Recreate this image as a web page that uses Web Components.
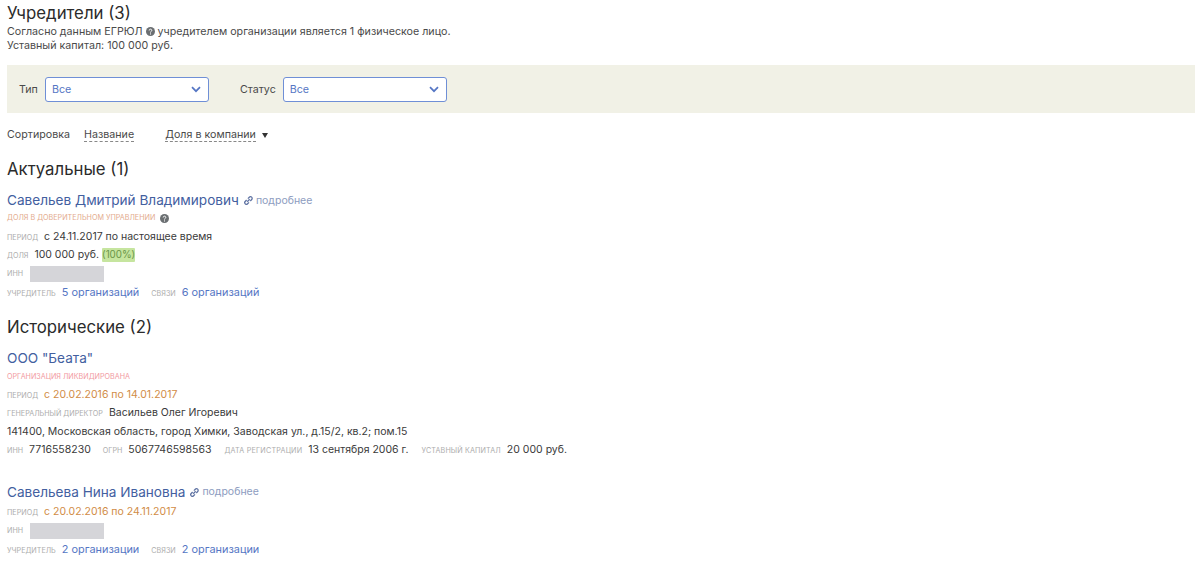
<!DOCTYPE html>
<html lang="ru">
<head>
<meta charset="utf-8">
<title>Учредители</title>
<style>
  html, body { margin: 0; background: #fff; }
  body { font-family: Inter, "Noto Sans", sans-serif; color: #333; overflow: hidden; }
  founders-page { height: 565px; }
</style>
</head>
<body>
<founders-page>
  <h-title slot="head" style="--top:2px;--h:23px">Учредители (3)</h-title>
  <div slot="head" class="intro">Согласно данным ЕГРЮЛ <q-mark></q-mark> учредителем организации является 1 физическое лицо.</div>
  <div slot="head" class="intro">Уставный капитал: 100 000 руб.</div>

  <filter-bar>
    <pick-select label="Тип" value="Все"></pick-select>
    <pick-select label="Статус" value="Все"></pick-select>
  </filter-bar>

  <sort-bar></sort-bar>

  <h-title style="--top:15px;--h:24px">Актуальные (1)</h-title>
  <person-card name="Савельев Дмитрий Владимирович" more>
    <info-row tight><small-label color="#e3ab8e">доля в доверительном управлении</small-label><q-mark style="margin-left:5px"></q-mark></info-row>
    <info-row><small-label>период</small-label><span>с 24.11.2017 по настоящее время</span></info-row>
    <info-row><small-label>доля</small-label><span>100 000 руб.</span><span class="pct">(100%)</span></info-row>
    <info-row><small-label>инн</small-label><blur-box></blur-box></info-row>
    <info-row><small-label>учредитель</small-label><a-link>5 организаций</a-link><small-label class="next">связи</small-label><a-link>6 организаций</a-link></info-row>
  </person-card>

  <h-title style="--top:13px;--h:24px">Исторические (2)</h-title>
  <person-card name="ООО &quot;Беата&quot;">
    <info-row tight style="padding-top:2px;box-sizing:border-box"><small-label color="#f29aa2">организация ликвидирована</small-label></info-row>
    <info-row><small-label>период</small-label><span class="old">с 20.02.2016 по 14.01.2017</span></info-row>
    <info-row><small-label>генеральный директор</small-label><span>Васильев Олег Игоревич</span></info-row>
    <info-row><span>141400, Московская область, город Химки, Заводская ул., д.15/2, кв.2; пом.15</span></info-row>
    <info-row><small-label>инн</small-label><span>7716558230</span><small-label class="next">огрн</small-label><span>5067746598563</span><small-label class="next far" style="letter-spacing:.2px">дата регистрации</small-label><span>13 сентября 2006 г.</span><small-label class="next far" style="letter-spacing:.13px">уставный капитал</small-label><span>20 000 руб.</span></info-row>
  </person-card>

  <person-card name="Савельева Нина Ивановна" more style="--gap:21px;--head:22px">
    <info-row><small-label>период</small-label><span class="old">с 20.02.2016 по 24.11.2017</span></info-row>
    <info-row><small-label>инн</small-label><blur-box></blur-box></info-row>
    <info-row><small-label>учредитель</small-label><a-link>2 организации</a-link><small-label class="next">связи</small-label><a-link>2 организации</a-link></info-row>
  </person-card>
</founders-page>

<script>
// each element keeps its own little template, set in the class
const define = (name, css, html, proto = {}) => {
  customElements.define(name, class extends HTMLElement {
    constructor() {
      super();
      const root = this.attachShadow({ mode: "open" });
      root.innerHTML = `<style>${css}</style>${typeof html === "function" ? html(this) : html}`;
    }
    connectedCallback() {
      if (proto.render) {
        proto.render(this);
      }
    }
  });
};

define("founders-page", `
  :host { display: block; padding: 0 5px 0 7px; box-sizing: border-box; }
  ::slotted(.intro) { font-size: 10.7px; line-height: 14px; color: #4a4a4a; }
`, `<slot name="head"></slot><slot></slot>`);

define("h-title", `
  :host {
    display: block;
    margin-top: var(--top, 0);
    font-size: 16.8px;
    line-height: var(--h, 24px);
    color: #2b2b2b;
  }
`, `<slot></slot>`);

define("q-mark", `
  :host { display: inline-block; vertical-align: -1px; width: 9px; height: 9px; }
  svg { display: block; }
`, `<svg width="9" height="9" viewBox="0 0 9 9"><circle cx="4.5" cy="4.5" r="4.5" fill="#6b6f72"/><path d="M3.2 3.5a1.3 1.3 0 1 1 1.9 1.1c-.4.2-.6.4-.6.9" fill="none" stroke="#fff" stroke-width=".9"/><circle cx="4.5" cy="6.9" r=".55" fill="#fff"/></svg>`);

define("filter-bar", `
  :host {
    display: flex;
    align-items: center;
    gap: 31px;
    height: 48px;
    margin-top: 12px;
    padding-left: 12px;
    background: #f1f1e6;
  }
`, `<slot></slot>`);

define("pick-select", `
  :host { display: flex; align-items: center; gap: 7px; font-size: 10.7px; color: #4a4a4a; }
  .box {
    display: flex;
    align-items: center;
    justify-content: space-between;
    box-sizing: border-box;
    width: 164px;
    height: 25px;
    padding: 0 7px 0 6px;
    background: #fff;
    border: 1px solid #6f8fd6;
    border-radius: 3px;
    color: #5576c4;
  }
  svg { display: block; }
`, (el) => `<span>${el.getAttribute("label")}</span>
  <div class="box"><span>${el.getAttribute("value")}</span>
  <svg width="10" height="7" viewBox="0 0 10 7"><path d="M1 1.2 5 5.2 9 1.2" fill="none" stroke="#5576c4" stroke-width="1.7"/></svg></div>`);

define("sort-bar", `
  :host {
    display: flex;
    align-items: center;
    height: 14px;
    margin-top: 14px;
    padding-top: 1px;
    font-size: 10.7px;
    line-height: 14px;
    color: #4a4a4a;
  }
  .opt { border-bottom: 1px dashed #888; line-height: 12px; }
  .first { margin-left: 14px; }
  .second { margin-left: 31px; }
  .arrow { margin-left: 6px; font-size: 0; width: 0; height: 0; border: 3.5px solid transparent; border-top: 5px solid #333; border-bottom: 0; }
`, `<span>Сортировка</span><span class="opt first">Название</span><span class="opt second">Доля в компании</span><span class="arrow"></span>`);

define("person-card", `
  :host { display: block; margin-top: var(--gap, 11px); }
  .head { display: flex; align-items: baseline; height: var(--head, 17px); line-height: var(--head, 17px); }
  .name { font-size: 13.6px; color: #43609f; }
  .more { display: inline-flex; align-items: center; gap: 3px; margin-left: 5px; font-size: 10.5px; color: #8d9cc0; }
  svg { display: block; }
`, (el) => `<div class="head"><span class="name">${el.getAttribute("name")}</span>
  ${el.hasAttribute("more") ? `<span class="more"><svg width="9" height="9" viewBox="0 0 9 9" fill="none" stroke="#5f73a3" stroke-width="1.3"><path d="M3.9 2.6 5.3 1.2a1.5 1.5 0 0 1 2.4 2.3L6.3 5"/><path d="M5 6.4 3.6 7.8A1.5 1.5 0 0 1 1.2 5.5L2.6 4"/><path d="M3.2 5.8 5.7 3.3"/></svg>подробнее</span>` : ""}</div><slot></slot>`);

define("info-row", `
  :host {
    display: flex;
    align-items: baseline;
    gap: 6px;
    height: 18.6px;
    line-height: 18.6px;
    font-size: 10.5px;
    color: #3a3a3a;
  }
  :host([tight]) { gap: 0; align-items: center; }
  ::slotted(.next) { margin-left: 6px; }
  ::slotted(.far) { margin-left: 7px; }
  ::slotted(.old) { color: #d18c46; }
  ::slotted(.pct) { background: #c6e59f; color: #6b9648; font-size: 9.8px; line-height: 14px; margin-left: -3px; border-radius: 1px; }
`, `<slot></slot>`);

define("small-label", `
  :host { font-size: 7.2px; text-transform: uppercase; color: #adadad; letter-spacing: 0; white-space: nowrap; }
`, `<slot></slot>`, {
  render(el) {
    const c = el.getAttribute("color");
    if (c) {
      el.style.color = c;
    }
  },
});

define("a-link", `
  :host { color: #5576c4; font-size: 10.9px; white-space: nowrap; }
`, `<slot></slot>`);

define("blur-box", `
  :host { display: block; align-self: center; width: 74px; height: 16px; margin-left: 1px; background: #d5d5d9; filter: blur(.5px); }
`, ``);
</script>
</body>
</html>
